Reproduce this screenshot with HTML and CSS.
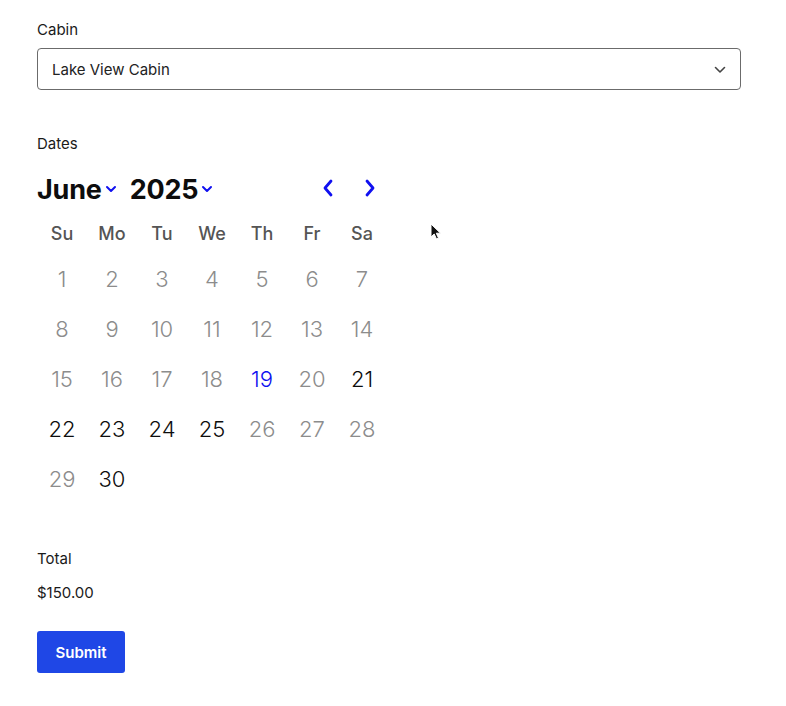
FILE: index.html
```html
<!DOCTYPE html>
<html lang="en">
<head>
  <meta charset="UTF-8">
  <title>Book a Cabin</title>
  <meta name="viewport" content="width=device-width, initial-scale=1.0">
  <link rel="stylesheet" href="styles.css">
</head>
<body>
  <form class="booking">
    <label class="field-label">Cabin</label>
    <div class="select-box">
      <span>Lake View Cabin</span>
      <svg class="select-chevron" width="12" height="8" viewBox="0 0 12 8"><path d="M1.5 1.5 6 6l4.5-4.5" fill="none" stroke="#444" stroke-width="1.6" stroke-linecap="round" stroke-linejoin="round"/></svg>
    </div>

    <label class="field-label dates-label">Dates</label>
    <div class="calendar">
      <div class="cal-header">
        <div class="cal-title">
          <span class="cal-month">June</span>
          <svg class="cal-drop" width="12" height="8" viewBox="0 0 12 8"><path d="M2 2l4 4 4-4" fill="none" stroke="#1010f0" stroke-width="2" stroke-linecap="round" stroke-linejoin="round"/></svg>
          <span class="cal-year">2025</span>
          <svg class="cal-drop" width="12" height="8" viewBox="0 0 12 8"><path d="M2 2l4 4 4-4" fill="none" stroke="#1010f0" stroke-width="2" stroke-linecap="round" stroke-linejoin="round"/></svg>
        </div>
        <div class="cal-nav">
          <svg width="14" height="18" viewBox="0 0 14 18"><path d="M10 2 4 9l6 7" fill="none" stroke="#1010f0" stroke-width="2.8" stroke-linecap="round" stroke-linejoin="round"/></svg>
          <svg width="14" height="18" viewBox="0 0 14 18"><path d="M4 2l6 7-6 7" fill="none" stroke="#1010f0" stroke-width="2.8" stroke-linecap="round" stroke-linejoin="round"/></svg>
        </div>
      </div>
      <div class="cal-weekdays">
        <span>Su</span><span>Mo</span><span>Tu</span><span>We</span><span>Th</span><span>Fr</span><span>Sa</span>
      </div>
      <div class="cal-days" id="days"></div>
    </div>

    <label class="field-label total-label">Total</label>
    <p class="total">$150.00</p>

    <button type="button" class="submit-btn">Submit</button>
  </form>

  <svg class="cursor" width="12" height="18" viewBox="0 0 12 18"><path d="M1 1v13l3.2-3 2.3 5 2-.9-2.2-4.9H10.5z" fill="#111" stroke="#fff" stroke-width="1"/></svg>

  <script>
    // 19 = today, 21-25 and 30 open, rest blocked
    const abiertos = [21, 22, 23, 24, 25, 30];
    const hoy = 19;
    const cont = document.getElementById("days");
    for (let d = 1; d <= 30; d++) {
      const span = document.createElement("span");
      span.textContent = d;
      span.className = "day";
      if (d === hoy) span.className += " today";
      else if (abiertos.includes(d)) span.className += " open";
      cont.appendChild(span);
    }
  </script>
</body>
</html>
```

FILE: styles.css
```css
* { margin: 0; padding: 0; box-sizing: border-box; }
body {
  background: #fff;
  color: #111;
  font-family: 'Inter', 'Noto Sans', sans-serif;
  padding: 20px 37px;
}
.booking {
  width: 704px;
  display: flex;
  flex-direction: column;
  align-items: flex-start;
}
.field-label {
  font-size: 15px;
  line-height: 20px;
  color: #1a1a1a;
}
.select-box {
  margin-top: 8px;
  width: 704px;
  height: 42px;
  border: 1px solid #6b6b6b;
  border-radius: 4px;
  display: flex;
  align-items: center;
  justify-content: space-between;
  padding: 0 14px 0 14px;
  font-size: 15px;
  color: #222;
}
.select-chevron { margin-top: 1px; }
.dates-label { margin-top: 44px; }
.calendar {
  width: 350px;
  margin-top: 17px;
}
.cal-header {
  height: 36px;
  display: flex;
  align-items: center;
  justify-content: space-between;
}
.cal-title {
  display: flex;
  align-items: center;
  font-size: 27px;
  font-weight: 700;
  letter-spacing: -0.2px;
  color: #0d0d0d;
}
.cal-drop { margin: 0 13px 0 3px; }
.cal-nav {
  display: flex;
  gap: 28px;
  padding-right: 10px;
  margin-top: -2px;
}
.cal-weekdays, .cal-days {
  display: grid;
  grid-template-columns: repeat(7, 50px);
  justify-items: center;
}
.cal-weekdays {
  margin-top: 6px;
  height: 40px;
  align-items: center;
  font-size: 18px;
  font-weight: 500;
  color: #555;
}
.cal-days {
  margin-top: 1px;
  grid-auto-rows: 50px;
  align-items: center;
  font-size: 22px;
  font-weight: 300;
}
.day { color: #8c8c8c; }
.day.open { color: #0d0d0d; }
.day.today { color: #1010f0; }
.total-label { margin-top: 45px; }
.total {
  margin-top: 14px;
  font-size: 15px;
  line-height: 20px;
  color: #1a1a1a;
}
.submit-btn {
  margin-top: 28px;
  width: 88px;
  height: 42px;
  border: none;
  border-radius: 3px;
  background: #1f47e6;
  color: #fff;
  font-family: 'Inter', 'Noto Sans', sans-serif;
  font-size: 15px;
  font-weight: 600;
  cursor: pointer;
}
.cursor {
  position: absolute;
  left: 430px;
  top: 223px;
}
```
